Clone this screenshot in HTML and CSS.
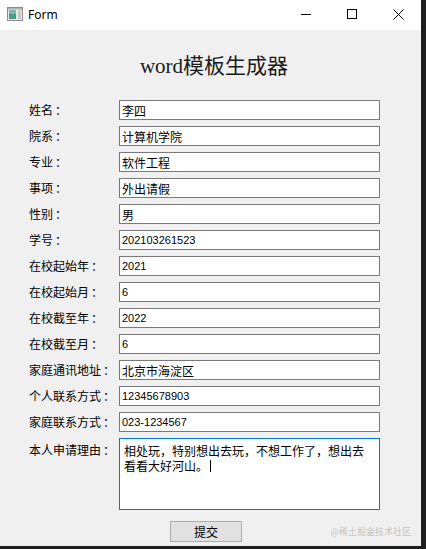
FILE: index.html
```html
<!DOCTYPE html>
<html lang="zh">
<head>
<meta charset="utf-8">
<title>Form</title>
<link rel="stylesheet" href="styles.css">
</head>
<body>
<div class="window">
  <div class="titlebar">
    <svg class="app-icon" width="16" height="14" viewBox="0 0 16 14">
      <rect x="0.5" y="0.5" width="15" height="13" fill="#e8e8e8" stroke="#8c8c8c"/>
      <rect x="2" y="3" width="7" height="9" fill="#4e9a88"/>
      <rect x="2" y="3" width="7" height="4" fill="#7fb8ab"/>
      <rect x="11" y="3" width="3" height="9" fill="#c8c8c8"/>
      <rect x="1" y="1" width="14" height="1.5" fill="#b0b0b0"/>
    </svg>
    <span class="title-text">Form</span>
    <span class="spacer"></span>
    <span class="ctrl">
      <svg width="10" height="10" viewBox="0 0 10 10"><line x1="0" y1="5.5" x2="10" y2="5.5" stroke="#000" stroke-width="1"/></svg>
    </span>
    <span class="ctrl">
      <svg width="10" height="10" viewBox="0 0 10 10"><rect x="0.5" y="0.5" width="9" height="9" fill="none" stroke="#000" stroke-width="1"/></svg>
    </span>
    <span class="ctrl">
      <svg width="11" height="11" viewBox="0 0 11 11"><path d="M0.5 0.5 L10.5 10.5 M10.5 0.5 L0.5 10.5" stroke="#000" stroke-width="1" fill="none"/></svg>
    </span>
  </div>
  <div class="content">
    <h1 class="heading">word模板生成器</h1>
    <div class="form">
      <label class="lbl">姓名<span class="colon">：</span></label><input class="field" value="李四">
      <label class="lbl">院系<span class="colon">：</span></label><input class="field" value="计算机学院">
      <label class="lbl">专业<span class="colon">：</span></label><input class="field" value="软件工程">
      <label class="lbl">事项<span class="colon">：</span></label><input class="field" value="外出请假">
      <label class="lbl">性别<span class="colon">：</span></label><input class="field" value="男">
      <label class="lbl">学号<span class="colon">：</span></label><input class="field num" value="202103261523">
      <label class="lbl">在校起始年<span class="colon">：</span></label><input class="field num" value="2021">
      <label class="lbl">在校起始月<span class="colon">：</span></label><input class="field num" value="6">
      <label class="lbl">在校截至年<span class="colon">：</span></label><input class="field num" value="2022">
      <label class="lbl">在校截至月<span class="colon">：</span></label><input class="field num" value="6">
      <label class="lbl">家庭通讯地址<span class="colon">：</span></label><input class="field" value="北京市海淀区">
      <label class="lbl">个人联系方式<span class="colon">：</span></label><input class="field num" value="12345678903">
      <label class="lbl">家庭联系方式<span class="colon">：</span></label><input class="field num" value="023-1234567">
      <label class="lbl lbl-top">本人申请理由<span class="colon">：</span></label>
      <div class="area">相处玩，特别想出去玩，不想工作了，想出去看看大好河山。<span class="caret"></span></div>
    </div>
    <div class="actions">
      <button class="btn">提交</button>
    </div>
  </div>
  <div class="watermark">@稀土掘金技术社区</div>
</div>
</body>
</html>
```
FILE: styles.css
```css
html, body {
  margin: 0;
  padding: 0;
  background: #1f1f1f;
}
body {
  width: 426px;
  height: 549px;
  overflow: hidden;
  font-family: "Noto Sans CJK SC", sans-serif;
}
.window {
  position: relative;
  width: 421px;
  height: 546px;
  background: #f0f0f0;
}
.titlebar {
  height: 30px;
  background: #ffffff;
  display: flex;
  align-items: center;
}
.app-icon {
  margin-left: 7px;
  margin-top: -2px;
  flex: none;
}
.title-text {
  margin-left: 5px;
  font-family: "Noto Sans", "Open Sans", sans-serif;
  font-size: 12px;
  color: #000;
  margin-top: -2px;
}
.spacer {
  flex: 1;
}
.ctrl {
  width: 46px;
  height: 30px;
  display: flex;
  align-items: center;
  justify-content: center;
}
.ctrl svg {
  margin-top: -2px;
}
.content {
  padding-top: 21px;
}
.heading {
  margin: 0;
  height: 30px;
  line-height: 30px;
  text-align: center;
  font-family: "Liberation Serif", "Noto Sans CJK SC", serif;
  font-weight: normal;
  font-size: 21px;
  color: #1a1a1a;
  padding-left: 7px;
}
.form {
  margin-top: 19px;
  margin-left: 29px;
  display: grid;
  grid-template-columns: 90px 261px;
  grid-auto-rows: 20px;
  row-gap: 6px;
  align-items: center;
}
.lbl {
  font-size: 12px;
  line-height: 16px;
  color: #000;
  white-space: nowrap;
}
.colon {
  display: inline-block;
  padding-left: 2px;
}
.lbl-top {
  align-self: start;
  padding-top: 4px;
}
.field {
  box-sizing: border-box;
  width: 261px;
  height: 20px;
  margin: 0;
  padding: 0 2px;
  border: 1px solid #7a7a7a;
  background: #fff;
  font-family: "Noto Sans CJK SC", sans-serif;
  font-size: 12px;
  color: #000;
  outline: none;
}
.field.num {
  font-family: "Liberation Sans", "Noto Sans CJK SC", sans-serif;
  font-size: 11px;
}
.area {
  grid-row: span 3;
  box-sizing: border-box;
  width: 261px;
  height: 72px;
  align-self: start;
  border: 1px solid #0078d7;
  background: #fff;
  padding: 4px 14px 0 4px;
  font-size: 12px;
  line-height: 15px;
  color: #000;
}
.caret {
  display: inline-block;
  width: 0;
  height: 12px;
  border-left: 1px solid #000;
  vertical-align: -1px;
  margin-left: 2px;
}
.actions {
  margin-top: 11px;
  padding-left: 170px;
}
.btn {
  box-sizing: border-box;
  width: 72px;
  height: 21px;
  margin: 0;
  padding: 0;
  border: 1px solid #adadad;
  background: #e1e1e1;
  font-family: "Noto Sans CJK SC", sans-serif;
  font-size: 12px;
  line-height: 19px;
  color: #000;
  display: block;
}
.watermark {
  position: absolute;
  right: 10px;
  bottom: 8px;
  font-size: 9px;
  line-height: 12px;
  color: #c4c4c4;
  white-space: nowrap;
}
```
